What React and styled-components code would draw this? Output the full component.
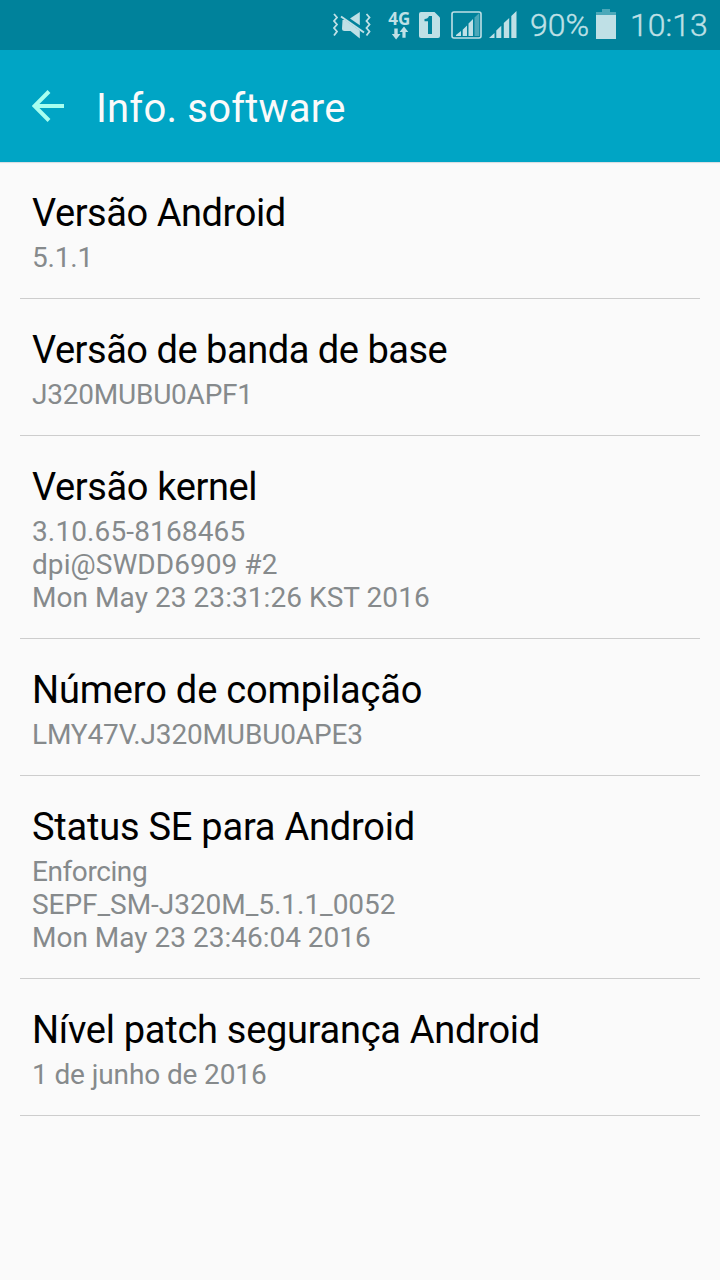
import React from 'react';
import styled, { createGlobalStyle } from 'styled-components';

const GlobalStyle = createGlobalStyle`
  * { box-sizing: border-box; }
  body { margin: 0; background: #fafafa; font-family: Roboto, "Liberation Sans", sans-serif; }
`;

const Screen = styled.div`
  display: flex;
  flex-direction: column;
  width: 720px;
  height: 1280px;
  overflow: hidden;
  background: #fafafa;
`;

const StatusBar = styled.div`
  display: flex;
  align-items: center;
  justify-content: flex-end;
  height: 50px;
  padding-right: 11px;
  background: #00829b;
  color: #bfe0e6;
`;

const StatusIcon = styled.svg`
  display: block;
  flex: none;
  height: 50px;
  width: ${(p) => p.$width}px;
  margin-right: ${(p) => p.$gap}px;
`;

const StatusText = styled.span`
  width: ${(p) => p.$width}px;
  margin-right: ${(p) => p.$gap || 0}px;
  font-size: 32px;
  font-weight: 300;
  line-height: 50px;
  white-space: nowrap;
  -webkit-text-stroke: 0.4px currentColor;
`;

const AppBar = styled.header`
  display: flex;
  align-items: center;
  height: 112px;
  padding-left: 32px;
  background: #00a5c5;
`;

const BackIcon = styled.svg`
  display: block;
  width: 32px;
  height: 32px;
  margin-right: 32px;
`;

const PageTitle = styled.h1`
  margin: 0;
  padding-top: 4px;
  color: #fafafa;
  font-size: 40px;
  font-weight: 400;
  line-height: 47px;
  letter-spacing: 0.2px;
`;

const List = styled.main`
  padding: 0 20px;
  box-shadow: inset 0 2px 1px -1px #d5dbe0;
`;

const Item = styled.section`
  padding: 29px 12px 24px;
  border-bottom: 1px solid #cdcdcd;
`;

const ItemTitle = styled.h2`
  margin: 0 0 5px;
  color: #000;
  font-size: 38px;
  font-weight: 400;
  line-height: 45px;
  letter-spacing: ${(p) => p.$tracking}px;
`;

const ItemValue = styled.p`
  margin: 0;
  color: #868a8c;
  font-size: 28px;
  line-height: 33px;
  letter-spacing: ${(p) => p.$tracking}px;
`;

const items = [
  { title: 'Versão Android', tracking: -0.44, lines: [['5.1.1', -0.2]] },
  { title: 'Versão de banda de base', tracking: -0.47, lines: [['J320MUBU0APF1', -0.22]] },
  {
    title: 'Versão kernel',
    tracking: -0.38,
    lines: [
      ['3.10.65-8168465', 0.13],
      ['dpi@SWDD6909 #2', 0.06],
      ['Mon May 23 23:31:26 KST 2016', 0.06],
    ],
  },
  { title: 'Número de compilação', tracking: -0.18, lines: [['LMY47V.J320MUBU0APE3', -0.15]] },
  {
    title: 'Status SE para Android',
    tracking: -0.23,
    lines: [
      ['Enforcing', -0.42],
      ['SEPF_SM-J320M_5.1.1_0052', -0.04],
      ['Mon May 23 23:46:04 2016', 0],
    ],
  },
  { title: 'Nível patch segurança Android', tracking: -0.28, lines: [['1 de junho de 2016', -0.12]] },
];

const MuteIcon = () => (
  <StatusIcon $width={40} $gap={16} viewBox="332 0 40 50" fill="currentColor">
    <path d="M350 18.5 359.8 12V25.2Z" />
    <path d="M342.5 20H345L359.8 30.5V38.5L350.5 31H344.5Q342 31 342 28.5Z" />
    <path d="M341 16.5 364 32.5" stroke="currentColor" strokeWidth="2" />
    <path
      d="M334 14 337 17.5 334 21 337 24.5 334 28 337 31.5 334 35.5M366.5 14 369.5 17.5 366.5 21 369.5 24.5 366.5 28 369.5 31.5 366.5 35.5"
      fill="none"
      stroke="currentColor"
      strokeWidth="1.8"
    />
  </StatusIcon>
);

const DataIcon = () => (
  <StatusIcon $width={23} $gap={8} viewBox="388 0 23 50" fill="currentColor">
    <text x="388.3" y="24.6" fontFamily="Open Sans, sans-serif" fontSize="17" fontWeight="700" textLength="22" lengthAdjust="spacingAndGlyphs">4G</text>
    <path d="M394.3 28.5H397.7V34H400.5L396.1 39.5 391.8 34H394.3Z" />
    <path d="M404 26.5 408.3 32H405.6V37.8H402.4V32H399.6Z" />
  </StatusIcon>
);

const SimIcon = () => (
  <StatusIcon $width={21} $gap={11} viewBox="419 0 21 50">
    <path d="M421 12H434.5L440 17.5V36Q440 38 438 38H421Q419 38 419 36V14Q419 12 421 12Z" fill="currentColor" />
    <path d="M429 16H432V34H428V21.2H424.5V19Q428 18.8 429 16Z" fill="#00829b" />
  </StatusIcon>
);

const RoamingSignalIcon = () => (
  <StatusIcon $width={31} $gap={7} viewBox="451 0 31 50" fill="currentColor">
    <rect x="452" y="12" width="29" height="26" rx="2" fill="none" stroke="currentColor" strokeWidth="1.6" />
    <path d="M456 36V35L461 31V36ZM462.7 36V29.7L467 25.5V36ZM468.5 36V23.5L473 19V36Z" />
    <path d="M474.5 36V17.5L479.3 13V36Z" opacity="0.4" />
  </StatusIcon>
);

const SignalIcon = () => (
  <StatusIcon $width={28} $gap={13} viewBox="489 0 28 50" fill="currentColor">
    <path d="M489 38 494.5 33V38ZM496.3 38V30.5L501.3 25.7V38ZM503.8 38V23L509.2 18V38ZM511.3 38V16L516.5 11V38Z" />
  </StatusIcon>
);

const BatteryIcon = () => (
  <StatusIcon $width={20} $gap={14} viewBox="596 0 20 50" fill="currentColor">
    <path d="M602 9H610V12H616V15H596V12H602Z" opacity="0.4" />
    <rect x="596" y="15" width="20" height="24" />
  </StatusIcon>
);

export default function App() {
  return (
    <>
      <GlobalStyle />
      <Screen>
        <StatusBar>
          <MuteIcon />
          <DataIcon />
          <SimIcon />
          <RoamingSignalIcon />
          <SignalIcon />
          <StatusText $width={59} $gap={7}>90%</StatusText>
          <BatteryIcon />
          <StatusText $width={79}>10:13</StatusText>
        </StatusBar>
        <AppBar>
          <BackIcon viewBox="0 0 32 32" fill="none" stroke="#a7fff0" strokeWidth="4">
            <path d="M32 16H3M17 1.5 2.5 16 17 30.5" />
          </BackIcon>
          <PageTitle>Info. software</PageTitle>
        </AppBar>
        <List>
          {items.map(({ title, tracking, lines }) => (
            <Item key={title}>
              <ItemTitle $tracking={tracking}>{title}</ItemTitle>
              {lines.map(([text, lineTracking]) => (
                <ItemValue key={text} $tracking={lineTracking}>{text}</ItemValue>
              ))}
            </Item>
          ))}
        </List>
      </Screen>
    </>
  );
}
